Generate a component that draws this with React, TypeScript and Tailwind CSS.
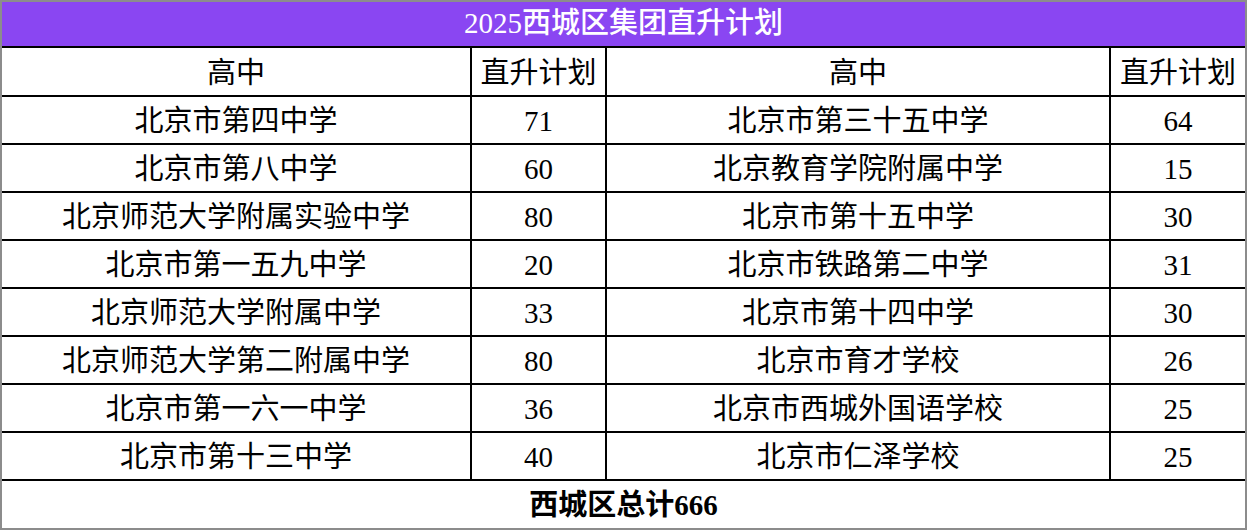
import React from "react";

// Dữ liệu bảng: mỗi dòng gồm 2 trường (trái + phải)
const rows: [string, number, string, number][] = [
  ["北京市第四中学", 71, "北京市第三十五中学", 64],
  ["北京市第八中学", 60, "北京教育学院附属中学", 15],
  ["北京师范大学附属实验中学", 80, "北京市第十五中学", 30],
  ["北京市第一五九中学", 20, "北京市铁路第二中学", 31],
  ["北京师范大学附属中学", 33, "北京市第十四中学", 30],
  ["北京师范大学第二附属中学", 80, "北京市育才学校", 26],
  ["北京市第一六一中学", 36, "北京市西城外国语学校", 25],
  ["北京市第十三中学", 40, "北京市仁泽学校", 25],
];

const font = { fontFamily: '"Liberation Serif", "Noto Sans CJK SC", serif' };

function Cell({ children, last }: { children: React.ReactNode; last?: boolean }) {
  return (
    <div
      className={`flex items-center justify-center pt-[3px] border-b-2 border-black text-[29px] leading-none text-black ${
        last ? "" : "border-r-2"
      }`}
    >
      {children}
    </div>
  );
}

export default function App() {
  return (
    <div className="w-[1247px] h-[530px] bg-white" style={font}>
      <div className="w-full h-full border-2 border-[#8c8c8c] flex flex-col">
        {/* Tiêu đề */}
        <div className="h-[46px] shrink-0 flex items-center justify-center bg-[#8a46f2] border-b-2 border-black text-white text-[29px] font-medium">
          2025西城区集团直升计划
        </div>

        {/* Bảng chính */}
        <div className="grid grid-cols-[470px_135px_504px_1fr] grid-rows-[49px_repeat(8,48px)]">
          <Cell>高中</Cell>
          <Cell>直升计划</Cell>
          <Cell>高中</Cell>
          <Cell last>直升计划</Cell>
          {rows.map(([a, x, b, y]) => (
            <React.Fragment key={a}>
              <Cell>{a}</Cell>
              <Cell>{x}</Cell>
              <Cell>{b}</Cell>
              <Cell last>{y}</Cell>
            </React.Fragment>
          ))}
        </div>

        {/* Tổng cộng */}
        <div className="flex-1 flex items-center justify-center pt-[3px] text-[29px] font-bold text-black">
          西城区总计666
        </div>
      </div>
    </div>
  );
}
